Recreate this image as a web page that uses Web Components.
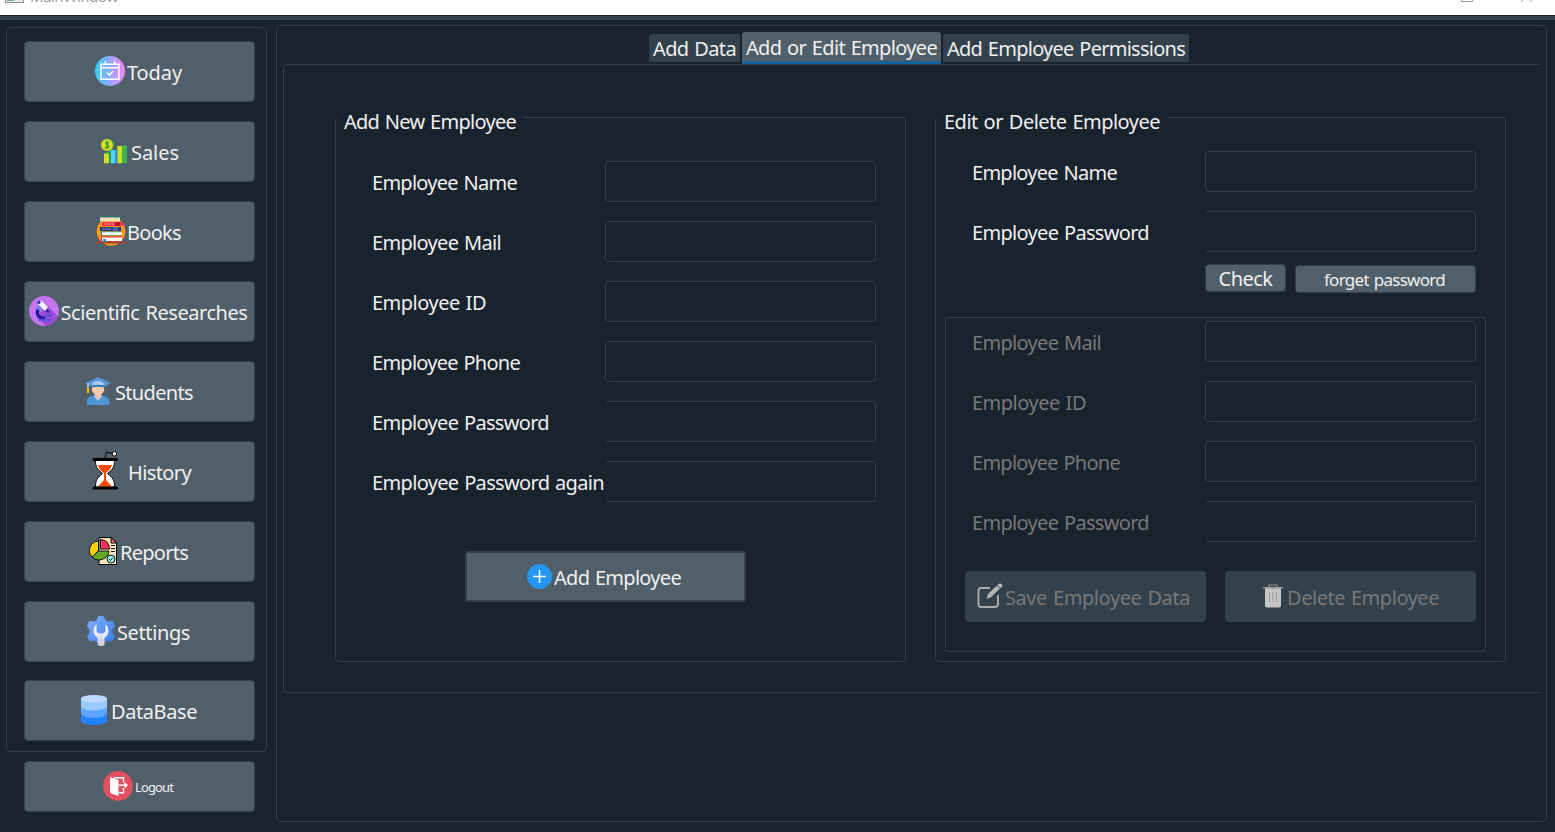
<!DOCTYPE html>
<html lang="en">
<head>
<meta charset="utf-8">
<title>MainWindow</title>
<style>
html,body{margin:0;height:100%;background:#19232d;overflow:hidden}
body{font-family:"Noto Sans","Open Sans",sans-serif;font-size:20px;color:#f0f0f0}
</style>
</head>
<body>
<main-window></main-window>
<script>
const ICONS = {
today:`<svg viewBox="0 0 30 30" width="30" height="30"><defs><linearGradient id="g"><stop stop-color="#2fd0f8"/><stop offset="1" stop-color="#fa82ff"/></linearGradient></defs><circle cx="15" cy="15" r="15" fill="url(#g)"/><g fill="none" stroke="#fff" stroke-width="1.5"><path d="M6 8.2H24V23.3H6ZM6 11.8H24"/><path d="M10.3 4.8V8M19.7 4.8V8" stroke-width="1.3"/><path d="M12 16.800L14.300 18.900L18 15.300"/></g></svg>`,
sales:`<svg viewBox="0 0 30 30" width="30" height="30"><g><path fill="#25a657" d="M5 16H11V27H5ZM9 13H12V27H9Z"/><path fill="#d5dd24" d="M4 17.500H8.800V27.200H4ZM17.300 10H22V27.200H17.300Z"/><path fill="#3ab54a" d="M22 9.500H27V27.200H22Z"/><path fill="#52d2ff" d="M11 14H15.500V27.200H11Z"/><path fill="#1597d4" d="M15.500 14H17.300V27.200H15.500Z"/></g><circle cx="8.300" cy="9" r="5.800" fill="#3ab54a"/><circle cx="6.900" cy="9" r="5.900" fill="#d5dd24"/><path d="M9 6.800C6.500 5 4.500 7.500 7 8.800C10.500 10 8.500 13 5 11.200M7 4.800V13.200" fill="none" stroke="#28983f" stroke-width="1.200"/><path d="M20 7L23 4L25 5.500L28 2" stroke="#5b596c" fill="none"/></svg>`,
books:`<svg viewBox="0 0 30 30" width="30" height="30"><circle cx="15" cy="15.500" r="14.300" fill="#ff9819"/><path fill="#118c85" d="M4 .5H24V1.500H4Z"/><path fill="#f4ddb4" d="M4 1.500H24V5.500H4Z"/><path fill="#f73545" d="M6 6H27V10H6Z"/><path fill="#bd112e" d="M19 6H24V10H19Z"/><path d="M8 8H18" stroke="#ff929c" stroke-dasharray="3 1"/><path fill="#273a76" d="M4 11H25V15H4Z"/><path fill="#4a60a6" d="M17 11H22V15H17Z"/><path d="M6 13H15" stroke="#7689c5"/><path fill="#14867f" d="M5 15.500H26V19.500H5Z"/><path fill="#fff" d="M6 16.200H26V19H6Z"/><path fill="#e72e44" d="M5 20.500H26V26H5Z"/><path fill="#fff" d="M6 21.500H26V25H6Z"/><path fill="#a14532" d="M0 25.500H30V27.500H0Z"/><path fill="#2491db" d="M7 23H10V26H7Z"/></svg>`,
science:`<svg viewBox="0 0 30 30" width="30" height="30"><defs><clipPath id="c"><circle cx="15" cy="15" r="15"/></clipPath></defs><circle cx="15" cy="15" r="15" fill="#c475ef"/><path clip-path="url(#c)" d="M8 21L17 30H30V22L18 9Z" fill="#9a49d4"/><path d="M10.500 12C7 15 8 21.500 13 22H16" stroke="#2519a6" stroke-width="3.200" fill="none"/><path d="M9 9L13 9L12 15L8 13Z" fill="#7088ee"/><path d="M12 4.500L19 11L16 15L9 8Z" fill="#f5f3ff"/><path d="M8 7L10 4.500L12 6.500L10 8Z" fill="#2519a6"/><path d="M17 14L20 16" stroke="#2519a6" stroke-width="2"/><path d="M16 19.500H23M10 24H22" stroke="#5553d3" stroke-width="1.800"/></svg>`,
students:`<svg viewBox="0 0 30 30" width="30" height="30"><path d="M4 29V25.500C4 21.500 7.500 20 11 19.500H19C23 20 26.500 22 26.500 26V29Z" fill="#4f95d1"/><path d="M10.500 20L15 25L19.500 20L17 18.500H13Z" fill="#aacdea"/><path d="M13 16H17V21L15 23L13 21Z" fill="#f6bf9c"/><path d="M9 10H21V13Q22 15 20.500 15.500Q18.500 19.500 15 19.500Q11.500 19.500 9.500 15.500Q8 15 9 13Z" fill="#fccba8"/><path d="M15 1L28 7L22 10.500H8L2.500 7Z" fill="#5398d5"/><path d="M9.500 6.500Q15 3.500 20.500 6.500V10H9.500Z" fill="#abcced"/><path d="M9 9.500Q15 8 21 9.500V11.500Q15 9.800 9 11.500Z" fill="#3479ad"/><path d="M5 7V12" stroke="#fff"/><path d="M5 12V17" stroke="#f7bd00" stroke-width="2"/></svg>`,
history:`<svg viewBox="0 0 26 40" width="26" height="40"><path fill="#fff" stroke="#000" d="M3.500 9.500H22.500C22.500 16 21 18 15.500 22.500C21 27 22.500 29 22.500 36H3.500C3.500 29 5 27 10.500 22.500C5 18 3.500 16 3.500 9.500Z"/><path fill="#ff4800" d="M6 14H20C19 18 16 20 14 22V29L20 35.500H6L12 29V22C9 20 7 18 6 14Z"/><path d="M2 8.500H24.500M2 37H24.500" stroke="#000" stroke-width="3" stroke-linecap="round"/><path d="M13 7L14.500 1L22 2.800" stroke="#000" fill="none"/><circle cx="22.500" cy="2.800" r="2.200" fill="#fff" stroke="#000"/></svg>`,
reports:`<svg viewBox="0 0 30 30" width="30" height="30"><path d="M11 1.500H23L28.500 7V28.500H11Z" fill="#ffe7b7" stroke="#000"/><path d="M23 1.500V7H28.500Z" fill="#fb7865" stroke="#000"/><path d="M23 9.500H27M23 12.500H27M23 15.500H27" stroke="#15191b"/><path d="M10.500 15V5A9.500 9.500 0 0 0 4 21Z" fill="#ffd000" stroke="#111"/><path d="M4 21L10.500 15H21A10 10 0 0 1 4 21Z" fill="#62ac25" stroke="#111"/><path d="M12.500 13V3.500Q21 4 21.500 13Z" fill="#ff345b" stroke="#111"/><circle cx="23" cy="23" r="4" fill="#91f3fb" stroke="#111"/><path d="M21 23L22.500 24.500L25 21.500" fill="none" stroke="#111"/></svg>`,
settings:`<svg viewBox="0 0 30 30" width="30" height="30"><defs><linearGradient id="b" x2="1" y2="1"><stop stop-color="#82b2ff"/><stop offset="1" stop-color="#3a7bea"/></linearGradient><linearGradient id="w" x2="0" y2="1"><stop stop-color="#fff"/><stop offset="1" stop-color="#c8ccdd"/></linearGradient></defs><path fill="url(#b)" stroke="url(#b)" stroke-linejoin="round" d="M12.500 .5H17.500L19 4.500L22 6L26.500 5.500L28.500 10L26 13.500V17L28.500 20.500L26 25L21 24.500L18 26H12L9 24.500L4 25L1.500 20.500L4 17V13.500L1.500 10L3.500 5.500L8 6L11 4.500Z"/><path fill="url(#w)" d="M10.500 8.500Q7.500 10.500 7.500 15Q7.500 19.500 11.500 21.800V28Q11.500 30 15 30Q18.500 30 18.500 28V21.800Q22.500 19.500 22.500 15Q22.500 10.500 19.500 8.500V14.500Q19 17.500 15 17.500Q11 17.500 10.500 14.500Z"/></svg>`,
database:`<svg viewBox="0 0 26 30" width="26" height="30"><path fill="#2283ff" d="M0 20H26V26Q24 30 13 30Q2 30 0 26Z"/><path fill="#5ca6ff" d="M0 12H26V19Q22 23 13 23Q4 23 0 19Z"/><path fill="#98c9ff" d="M0 4H26V12Q22 15.500 13 15.500Q4 15.500 0 12Z"/><ellipse cx="13" cy="3.800" rx="13" ry="3.800" fill="#bddaff"/></svg>`,
logout:`<svg viewBox="0 0 30 30" width="30" height="30"><circle cx="15" cy="15" r="15" fill="#e14f60"/><path d="M11 6.700H20.500V11.500M20.500 17V21.800H16" fill="none" stroke="#fff" stroke-width="1.400"/><path d="M7 6L15.500 9V25L8.500 22.500Q7 22 7 20.500Z" fill="#fff"/><path d="M16 14.200H22" stroke="#fff" stroke-width="1.500"/><path d="M21.500 11L25 14.200L21.500 17.500Z" fill="#fff"/></svg>`,
add:`<svg viewBox="0 0 25 25" width="25" height="25"><circle cx="12.500" cy="12.500" r="12.500" fill="#2196f3"/><path d="M6 12.500H19M12.500 6V19" stroke="#fff" stroke-width="1.600"/></svg>`,
edit:`<svg viewBox="0 0 26 26" width="26" height="26"><path d="M13 5H4Q1.500 5 1.500 7.500V21.500Q1.500 24 4 24H18Q21 24 21 21V12" fill="none" stroke="#acacac" stroke-width="1.900"/><path d="M9.500 16L11 11L20 2.500L23 5.500L14 14.300Z" fill="#b4b4b4"/><path d="M21 1.500Q23-.5 25 1.500Q26 3 24.500 4.500L23.500 5L20.500 2Z" fill="#bcbcbc"/></svg>`,
trash:`<svg viewBox="0 0 20 24" width="20" height="24"><path d="M6 3V1H14V3" fill="none" stroke="#939393" stroke-width="1.200"/><path d="M0 3H20V4.200H0Z" fill="#a4a4a4"/><path d="M2 4.200H18V21.500Q18 23.500 16 23.500H4Q2 23.500 2 21.500Z" fill="#c6c6c6"/><path d="M6.500 8V18M10 8V18M13.500 8V18" stroke="#969696"/></svg>`
};

function define(name, css, html, setup) {
  const t = document.createElement('template');
  t.innerHTML = `<style>*{box-sizing:border-box}${css}</style>${html}`;
  customElements.define(name, class extends HTMLElement {
    connectedCallback() {
      if (this.shadowRoot) return;
      this.attachShadow({mode:'open'}).append(t.content.cloneNode(true));
      if (setup) setup(this, this.shadowRoot);
    }
  });
}

/* A single line of text whose tracking is adjusted to a given advance width. */
define('fit-text', `:host{display:block;white-space:pre;line-height:28px;flex:none}span{display:inline-block;word-spacing:1.2px}`, `<span></span>`, (el, root) => {
  const s = root.querySelector('span');
  s.textContent = el.getAttribute('text');
  const w = +el.getAttribute('w');
  if (w) {
    const natural = s.getBoundingClientRect().width;
    s.style.letterSpacing = ((w - natural) / s.textContent.length) + 'px';
    el.style.width = w + 'px';
  }
});

define('app-icon', `:host{display:block;flex:none}svg{display:block;overflow:visible}`, ``, (el, root) => {
  root.innerHTML += ICONS[el.getAttribute('name')];
});

define('push-button', `
:host{display:flex;align-items:center;box-sizing:border-box;flex:none;height:61px;background:#505f69;border:1px solid #32414b;border-radius:4px;padding-left:var(--pad,0)}
:host([disabled]){background:#32414b;color:#787878}
app-icon{margin-right:var(--gap,2px);margin-top:var(--iy,-1px)}
fit-text{margin-top:var(--ty,3px)}`, ``, (el, root) => {
  const i = el.getAttribute('icon');
  root.innerHTML += (i ? `<app-icon name="${i}"></app-icon>` : '') + `<fit-text text="${el.getAttribute('text')}" w="${el.getAttribute('w')}"></fit-text>`;
});

define('form-field', `
:host{display:flex;height:41px;margin-bottom:19px;align-items:center;flex:none}
fit-text{margin-top:2px}
.label{width:233px;flex:none}
.box{width:271px;height:41px;border:1px solid #32414b;border-radius:4px;background:#19232d}
:host([open]) .box{border-left-color:transparent}
:host([disabled]){color:#787878}`, `<div class="label"></div><div class="box"></div>`, (el, root) => {
  root.querySelector('.label').innerHTML = `<fit-text text="${el.getAttribute('label')}" w="${el.getAttribute('w')}"></fit-text>`;
});

define('group-box', `
:host{display:block;box-sizing:border-box;width:571px;height:545px;border:1px solid #32414b;border-radius:4px;flex:none}
.title{display:block;width:max-content;margin:-10px 0 0 1px;padding:0 7px;background:#19232d;height:27px}
`, `<div class="title"></div><slot></slot>`, (el, root) => {
  root.querySelector('.title').innerHTML = `<fit-text text="${el.getAttribute('label')}" w="${el.getAttribute('w')}"></fit-text>`;
});

define('title-bar', `
:host{display:flex;height:20px;box-sizing:border-box;background:#fff;border-bottom:4px solid #32414b;box-shadow:inset 0 -1px #19232d;overflow:hidden;color:#999;font:15px "Open Sans",sans-serif;align-items:flex-start}
.app{width:19px;height:14px;margin:-11px 6px 0 5px;border:1px solid #8a9295;box-shadow:inset 0 0 0 1px #eee;background:linear-gradient(90deg,#76a694 50%,#e6e9ea 50%);flex:none}
fit-text{margin-top:-18px}
svg{margin-left:auto;margin-right:22px;flex:none}`,
`<div class="app"></div><fit-text text="MainWindow" w="88"></fit-text>
<svg width="72" height="3"><path d="M.5-9V1.500H11.500V-9M60 2L65.500-4L71 2" fill="none" stroke="#999"/></svg>`);

define('tab-item', `
:host{display:block;height:28px;background:#32414b;border-radius:3px 3px 0 0;padding:0 4px;margin-top:2px;box-sizing:border-box;flex:none}
:host([selected]){height:32px;margin-top:0;background:#505f69;border-bottom:3px solid #1464a0}
fit-text{margin-top:1px}:host([selected]) fit-text{margin-top:2px}`, ``, (el, root) => {
  root.innerHTML += `<fit-text text="${el.getAttribute('text')}" w="${el.getAttribute('w')}"></fit-text>`;
});

define('side-bar', `
:host{display:block;width:261px;margin:7px 9px 0 6px;flex:none}
.frame{height:725px;border:1px solid #32414b;border-radius:5px;padding:13px 0 0 17px}
push-button{width:231px;margin-bottom:19px}
.frame push-button:nth-child(8){margin-bottom:18px}
.out{height:51px;margin:9px 0 0 18px;font-size:13px}`,
`<div class="frame">
<push-button icon="today" text="Today" w="55" style="--pad:70px"></push-button>
<push-button icon="sales" text="Sales" w="48" style="--pad:75px;--gap:1px"></push-button>
<push-button icon="books" text="Books" w="54" style="--pad:71px;--gap:1px"></push-button>
<push-button icon="science" text="Scientific Researches" w="187" style="--pad:4px;--gap:1.500px"></push-button>
<push-button icon="students" text="Students" w="78" style="--pad:58px"></push-button>
<push-button icon="history" text="History" w="63" style="--pad:67px;--gap:10px;--iy:-2px"></push-button>
<push-button icon="reports" text="Reports" w="68" style="--pad:63px"></push-button>
<push-button icon="settings" text="Settings" w="73" style="--pad:61px;--gap:1px"></push-button>
<push-button icon="database" text="DataBase" w="86" style="--pad:56px;--gap:4px"></push-button>
</div>
<push-button class="out" icon="logout" text="Logout" w="38" style="--pad:78px;--ty:1px"></push-button>`);

define('add-employee', `
:host{display:block}
.fields{padding:26px 0 0 36px;height:386px}
push-button{width:281px;height:51px;border-width:2px;margin:30px 0 0 129px;--pad:60px;--gap:2px;border-radius:3px}`,
`<group-box label="Add New Employee" w="172">
<div class="fields">
<form-field label="Employee Name" w="145"></form-field>
<form-field label="Employee Mail" w="129"></form-field>
<form-field label="Employee ID" w="114"></form-field>
<form-field label="Employee Phone" w="148"></form-field>
<form-field label="Employee Password" w="177" open></form-field>
<form-field label="Employee Password again" w="232" open></form-field>
</div>
<push-button icon="add" text="Add Employee" w="127"></push-button>
</group-box>`);

define('edit-employee', `
:host{display:block}
.fields{padding:16px 0 0 36px;height:129px}
.row{display:flex;align-items:flex-start;margin:0 0 24px 269px;height:29px}
.row push-button{height:28px}
.check{width:81px;--pad:12.500px;--ty:1px}
.forget{width:181px;margin:1px 0 0 9px;--pad:28px;font-size:17px;--ty:1px}
.frame{width:541px;height:335px;margin-left:9px;border:1px solid #32414b;border-radius:4px;padding:3px 0 0 26px}
.actions{display:flex;margin:29px 0 0 -7px;gap:19px}
.actions push-button{height:51px;width:241px}
.actions push-button+push-button{width:251px}`,
`<group-box label="Edit or Delete Employee" w="216">
<div class="fields">
<form-field label="Employee Name" w="145"></form-field>
<form-field label="Employee Password" w="177" open></form-field>
</div>
<div class="row"><push-button class="check" text="Check" w="54"></push-button><push-button class="forget" text="forget password" w="121"></push-button></div>
<div class="frame">
<form-field disabled label="Employee Mail" w="129"></form-field>
<form-field disabled label="Employee ID" w="114"></form-field>
<form-field disabled label="Employee Phone" w="148"></form-field>
<form-field disabled label="Employee Password" w="177" open></form-field>
<div class="actions">
<push-button disabled icon="edit" text="Save Employee Data" w="185" style="--pad:11px;--gap:2px"></push-button>
<push-button disabled icon="trash" text="Delete Employee" w="152" style="--pad:37px;--gap:4px"></push-button>
</div></div>
</group-box>`);

define('main-window', `
:host{display:block;width:1555px;height:832px;background:#19232d}
.body{display:flex}
.main{width:1271px;height:797px;margin-top:5px;border:1px solid #32414b;border-radius:5px;padding:6px 0 0 6px}
.tabs{display:flex;gap:2px;margin-left:366px;height:32px;align-items:flex-start}
.pane{display:flex;gap:29px;width:1257px;height:629px;border:1px solid #32414b;border-right:0;border-radius:4px 0 0 4px;padding:52px 0 0 51px}`,
`<title-bar></title-bar>
<div class="body"><side-bar></side-bar>
<div class="main">
<div class="tabs"><tab-item text="Add Data" w="83"></tab-item><tab-item selected text="Add or Edit Employee" w="191"></tab-item><tab-item text="Add Employee Permissions" w="238"></tab-item></div>
<div class="pane"><add-employee></add-employee><edit-employee></edit-employee></div>
</div></div>`);
</script>
</body>
</html>
